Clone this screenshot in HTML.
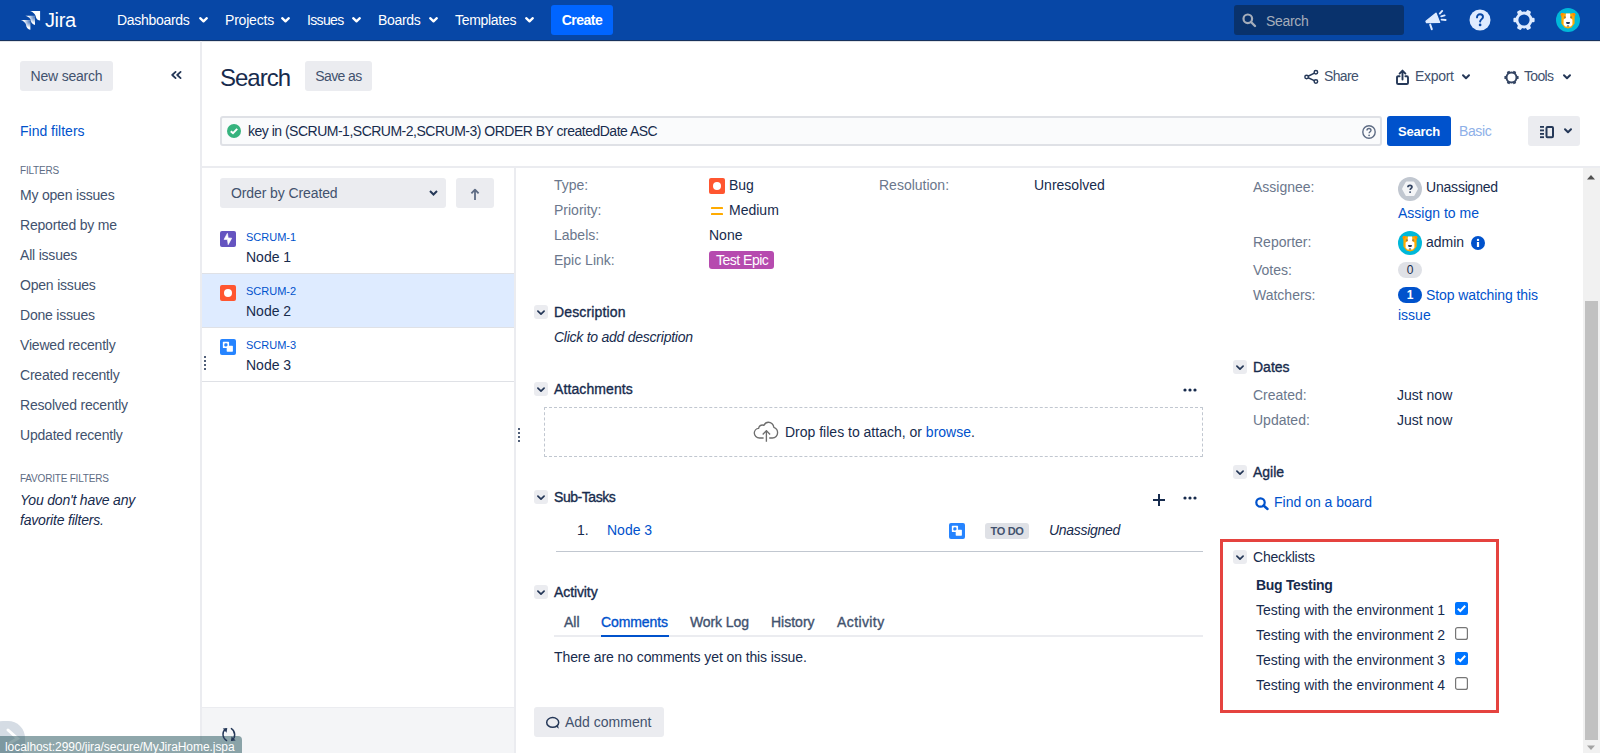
<!DOCTYPE html>
<html><head><meta charset="utf-8">
<style>
*{box-sizing:border-box;margin:0;padding:0}
html,body{width:1600px;height:753px;overflow:hidden;background:#fff;font-family:"Liberation Sans",sans-serif;font-size:14px;color:#172B4D}
.a{position:absolute}
.t{position:absolute;white-space:nowrap;line-height:20px}
.nv{color:#fff;top:10px}
.btn{position:absolute;background:#EBECF0;border-radius:3px;line-height:30px;text-align:center;color:#42526E}
.lbl{color:#6B778C}
.side{color:#42526E;left:20px}
.link{color:#0052CC}
.sh{-webkit-text-stroke:0.35px currentColor;color:#172B4D}
.tog{position:absolute;width:14px;height:14px;border-radius:3px;background:#EBECF0}
.tog svg{position:absolute;left:3px;top:4.5px}
svg{position:absolute;overflow:visible}
</style></head><body>

<!-- ============ NAV ============ -->
<div class="a" style="left:0;top:0;width:1600px;height:41px;background:#0747A6"></div>
<div class="a" style="left:0;top:40px;width:1600px;height:1px;background:#18325C"></div>
<div class="a" style="left:0;top:41px;width:1600px;height:1px;background:rgba(9,30,66,0.12)"></div>
<svg style="left:20px;top:10px" width="21" height="20" viewBox="20 10 21 20">
  <defs>
    <radialGradient id="lg1" cx="0.95" cy="0.15" r="0.75"><stop offset="0" stop-color="#fff" stop-opacity=".25"/><stop offset=".85" stop-color="#fff"/></radialGradient>
  </defs>
  <path d="M30.1 11.1 H40.1 V20.6 C38.4 20.2 36.6 19.2 36 17.4 C35.6 15.8 35.4 14.4 33.8 13.2 C32.8 12.3 31.4 11.5 30.1 11.1 Z" fill="#fff"/>
  <path d="M25.4 15.7 H35 V25 C33.3 24.6 31.6 23.4 31 21.6 C30.6 20 30.6 18.6 29 17.5 C28 16.6 26.7 16 25.4 15.7 Z" fill="url(#lg1)"/>
  <path d="M20.9 20.1 H30.4 V29.8 C28.7 29.4 27 28.2 26.4 26.4 C26 24.8 26 23.4 24.4 22.2 C23.4 21.3 22.2 20.5 20.9 20.1 Z" fill="url(#lg1)"/>
</svg>
<div class="t" style="left:45px;top:8px;font-size:20px;line-height:24px;color:#fff;letter-spacing:-0.4px">Jira</div>

<div class="t nv" style="left:117px;letter-spacing:-0.3px">Dashboards</div>
<svg style="left:199px;top:17px" width="9" height="6" viewBox="0 0 9 6"><path d="M1.2 1.2 L4.5 4.4 L7.8 1.2" stroke="#fff" stroke-width="2.3" fill="none" stroke-linecap="round" stroke-linejoin="round"/></svg>
<div class="t nv" style="left:225px;letter-spacing:-0.2px">Projects</div>
<svg style="left:281px;top:17px" width="9" height="6" viewBox="0 0 9 6"><path d="M1.2 1.2 L4.5 4.4 L7.8 1.2" stroke="#fff" stroke-width="2.3" fill="none" stroke-linecap="round" stroke-linejoin="round"/></svg>
<div class="t nv" style="left:307px;letter-spacing:-0.65px">Issues</div>
<svg style="left:352px;top:17px" width="9" height="6" viewBox="0 0 9 6"><path d="M1.2 1.2 L4.5 4.4 L7.8 1.2" stroke="#fff" stroke-width="2.3" fill="none" stroke-linecap="round" stroke-linejoin="round"/></svg>
<div class="t nv" style="left:378px;letter-spacing:-0.3px">Boards</div>
<svg style="left:429px;top:17px" width="9" height="6" viewBox="0 0 9 6"><path d="M1.2 1.2 L4.5 4.4 L7.8 1.2" stroke="#fff" stroke-width="2.3" fill="none" stroke-linecap="round" stroke-linejoin="round"/></svg>
<div class="t nv" style="left:455px;letter-spacing:-0.3px">Templates</div>
<svg style="left:525px;top:17px" width="9" height="6" viewBox="0 0 9 6"><path d="M1.2 1.2 L4.5 4.4 L7.8 1.2" stroke="#fff" stroke-width="2.3" fill="none" stroke-linecap="round" stroke-linejoin="round"/></svg>
<div class="a" style="left:551px;top:5px;width:62px;height:30px;background:#0065FF;border-radius:3px;color:#fff;font-weight:bold;line-height:30px;text-align:center;letter-spacing:-0.5px">Create</div>

<div class="a" style="left:1234px;top:5px;width:170px;height:30px;background:#09326C;border-radius:3px"></div>
<svg style="left:1242px;top:13px" width="14" height="14" viewBox="0 0 14 14"><circle cx="5.8" cy="5.8" r="4.3" stroke="#A5ADBA" stroke-width="2.2" fill="none"/><path d="M9 9 L13 13" stroke="#A5ADBA" stroke-width="2.4" stroke-linecap="round"/></svg>
<div class="t" style="left:1266px;top:11px;color:#A5ADBA;letter-spacing:-0.3px">Search</div>

<!-- megaphone -->
<svg style="left:1425px;top:10px" width="22" height="20" viewBox="0 0 22 20">
  <path d="M1 11.3 L11 3.2 L14.6 12.4 L1.6 12.6 Z" fill="#DEEBFF" stroke="#DEEBFF" stroke-width="1.4" stroke-linejoin="round"/>
  <path d="M5.2 14.6 L6.8 19.2" stroke="#DEEBFF" stroke-width="2" stroke-linecap="round"/>
  <path d="M14.8 3.6 L17.2 0.9 M16.2 6.3 L19.6 5.4 M16.6 9.6 L20.6 10" stroke="#DEEBFF" stroke-width="1.9" stroke-linecap="round"/>
</svg>
<!-- help -->
<svg style="left:1469px;top:9px" width="22" height="22" viewBox="0 0 22 22">
  <circle cx="11" cy="11" r="10.5" fill="#DEEBFF"/>
  <path d="M8 8.4 C8 6.4 9.3 5.3 11 5.3 C12.8 5.3 14 6.4 14 8 C14 10 11.3 10.2 11.1 12.6" stroke="#0747A6" stroke-width="1.9" fill="none" stroke-linecap="round"/>
  <circle cx="11.1" cy="15.9" r="1.35" fill="#0747A6"/>
</svg>
<!-- gear -->
<svg style="left:1513px;top:9px" width="22" height="22" viewBox="0 0 22 22">
  <g fill="#DEEBFF">
    <circle cx="11" cy="11" r="8.4"/>
    <g transform="rotate(30 11 11)"><rect x="8.7" y="0.4" width="4.6" height="4" rx="1.2"/><rect x="8.7" y="17.6" width="4.6" height="4" rx="1.2"/></g>
    <g transform="rotate(90 11 11)"><rect x="8.7" y="0.4" width="4.6" height="4" rx="1.2"/><rect x="8.7" y="17.6" width="4.6" height="4" rx="1.2"/></g>
    <g transform="rotate(150 11 11)"><rect x="8.7" y="0.4" width="4.6" height="4" rx="1.2"/><rect x="8.7" y="17.6" width="4.6" height="4" rx="1.2"/></g>
  </g>
  <circle cx="11" cy="11" r="5.6" fill="#0747A6"/>
</svg>
<!-- avatar -->
<svg style="left:1556px;top:8px" width="24" height="24" viewBox="0 0 24 24">
  <circle cx="12" cy="12" r="12" fill="#00B8D9"/>
  <path d="M4.6 6.8 C4.6 5.2 6 4.6 7 5 L9 5.6 H15 L17 5 C18 4.6 19.4 5.2 19.4 6.8 L18.6 8.6 V15.5 L15.5 19.6 L12 20.4 L8.5 19.6 L5.4 15.5 V8.6 Z" fill="#FFAB00"/>
  <path d="M4.6 6.8 C4.6 5.2 6 4.6 7 5 L8 5.4 L5.4 9 Z M19.4 6.8 C19.4 5.2 18 4.6 17 5 L16 5.4 L18.6 9 Z" fill="#FF8B00"/>
  <path d="M9.9 5.6 H14.1 L14.4 10.3 L16.4 11.4 V16.8 L14.6 18.4 H9.4 L7.6 16.8 V11.4 L9.6 10.3 Z" fill="#fff"/>
  <circle cx="8.9" cy="9.2" r="1" fill="#9C7A4A"/><circle cx="15.1" cy="9.2" r="1" fill="#9C7A4A"/>
  <path d="M10 14.1 H14 L13.4 15.9 H10.6 Z" fill="#253858"/>
  <path d="M10.9 17.6 H13.1 L12.7 18.6 H11.3 Z" fill="#253858"/>
</svg>

<!-- ============ LEFT SIDEBAR ============ -->
<div class="a" style="left:200px;top:41px;width:2px;height:712px;background:#EBECF0"></div>
<div class="btn" style="left:20px;top:61px;width:93px;height:30px;letter-spacing:-0.2px">New search</div>
<svg style="left:171px;top:71px" width="11" height="8" viewBox="0 0 11 8"><path d="M4.6 0.9 L1.2 4 L4.6 7.1 M9.6 0.9 L6.2 4 L9.6 7.1" stroke="#253858" stroke-width="1.8" fill="none" stroke-linecap="round" stroke-linejoin="round"/></svg>
<div class="t link" style="left:20px;top:121px">Find filters</div>
<div class="t" style="left:20px;top:163px;font-size:10px;line-height:16px;color:#5E6C84;letter-spacing:-0.2px">FILTERS</div>
<div class="t side" style="top:185px;letter-spacing:-0.2px">My open issues</div>
<div class="t side" style="top:215px;letter-spacing:-0.2px">Reported by me</div>
<div class="t side" style="top:245px;letter-spacing:-0.2px">All issues</div>
<div class="t side" style="top:275px;letter-spacing:-0.2px">Open issues</div>
<div class="t side" style="top:305px;letter-spacing:-0.2px">Done issues</div>
<div class="t side" style="top:335px;letter-spacing:-0.2px">Viewed recently</div>
<div class="t side" style="top:365px;letter-spacing:-0.2px">Created recently</div>
<div class="t side" style="top:395px;letter-spacing:-0.2px">Resolved recently</div>
<div class="t side" style="top:425px;letter-spacing:-0.2px">Updated recently</div>
<div class="t" style="left:20px;top:471px;font-size:10px;line-height:16px;color:#5E6C84;letter-spacing:-0.2px">FAVORITE FILTERS</div>
<div class="t" style="left:20px;top:490px;font-style:italic;color:#172B4D;letter-spacing:-0.2px">You don't have any</div>
<div class="t" style="left:20px;top:510px;font-style:italic;color:#172B4D;letter-spacing:-0.2px">favorite filters.</div>
<!-- ============ HEADER ============ -->
<div class="t" style="left:220px;top:63px;font-size:24px;line-height:30px;color:#172B4D;letter-spacing:-1px">Search</div>
<div class="btn" style="left:305px;top:61px;width:67px;height:30px;letter-spacing:-0.6px">Save as</div>

<svg style="left:1304px;top:70px" width="14" height="14" viewBox="0 0 14 14"><g stroke="#253858" stroke-width="1.45" fill="#fff"><path d="M2.6 7 L11.9 2.3 M2.6 7 L11.9 11.4" fill="none"/><circle cx="2.6" cy="7" r="1.75"/><circle cx="11.9" cy="2.3" r="1.75"/><circle cx="11.9" cy="11.4" r="1.75"/></g></svg>
<div class="t" style="left:1324px;top:66px;color:#42526E;letter-spacing:-0.65px">Share</div>
<svg style="left:1396px;top:69px" width="13" height="16" viewBox="0 0 13 16"><g stroke="#253858" stroke-width="1.9" fill="none" stroke-linejoin="round" stroke-linecap="round"><path d="M6.5 10.5 V1.8 M3.6 4.6 L6.5 1.6 L9.4 4.6"/><path d="M3.6 7.2 H2.2 C1.5 7.2 1 7.7 1 8.4 V14 C1 14.6 1.5 15 2.2 15 H10.8 C11.5 15 12 14.6 12 14 V8.4 C12 7.7 11.5 7.2 10.8 7.2 H9.4"/></g></svg>
<div class="t" style="left:1415px;top:66px;color:#42526E;letter-spacing:-0.3px">Export</div>
<svg style="left:1462px;top:74px" width="8" height="6" viewBox="0 0 8 6"><path d="M1 1.2 L4 4.2 L7 1.2" stroke="#253858" stroke-width="2" fill="none" stroke-linecap="round" stroke-linejoin="round"/></svg>
<svg style="left:1504px;top:70px" width="15" height="15" viewBox="0 0 15 15">
  <circle cx="7.5" cy="7.5" r="5" stroke="#344563" stroke-width="2" fill="none"/>
  <g fill="#344563">
    <g transform="rotate(30 7.5 7.5)"><rect x="6" y="0.4" width="3" height="2.4" rx="0.6"/><rect x="6" y="12.2" width="3" height="2.4" rx="0.6"/></g>
    <g transform="rotate(90 7.5 7.5)"><rect x="6" y="0.4" width="3" height="2.4" rx="0.6"/><rect x="6" y="12.2" width="3" height="2.4" rx="0.6"/></g>
    <g transform="rotate(150 7.5 7.5)"><rect x="6" y="0.4" width="3" height="2.4" rx="0.6"/><rect x="6" y="12.2" width="3" height="2.4" rx="0.6"/></g>
  </g>
</svg>
<div class="t" style="left:1524px;top:66px;color:#42526E;letter-spacing:-0.65px">Tools</div>
<svg style="left:1563px;top:74px" width="8" height="6" viewBox="0 0 8 6"><path d="M1 1.2 L4 4.2 L7 1.2" stroke="#253858" stroke-width="2" fill="none" stroke-linecap="round" stroke-linejoin="round"/></svg>

<div class="a" style="left:220px;top:116px;width:1162px;height:30px;background:#FAFBFC;border:2px solid #DFE1E6;border-radius:3px"></div>
<svg style="left:227px;top:124px" width="14" height="14" viewBox="0 0 14 14"><circle cx="7" cy="7" r="7" fill="#36B37E"/><path d="M3.8 7.2 L6 9.2 L10.2 4.9" stroke="#fff" stroke-width="2" fill="none"/></svg>
<div class="t" style="left:248px;top:121px;letter-spacing:-0.5px">key in (SCRUM-1,SCRUM-2,SCRUM-3) ORDER BY createdDate ASC</div>
<svg style="left:1362px;top:125px" width="14" height="14" viewBox="0 0 14 14"><circle cx="7" cy="7" r="6.2" stroke="#5E6C84" stroke-width="1.4" fill="none"/><path d="M5 5.5 C5 4 6 3.5 7 3.5 C8.2 3.5 9 4.2 9 5.3 C9 6.6 7.2 6.8 7.1 8.3" stroke="#5E6C84" stroke-width="1.4" fill="none"/><circle cx="7.1" cy="10.3" r="0.9" fill="#5E6C84"/></svg>
<div class="a" style="left:1387px;top:116px;width:64px;height:30px;background:#0052CC;border-radius:3px;color:#fff;font-weight:bold;font-size:13px;line-height:31px;text-align:center;letter-spacing:-0.2px">Search</div>
<div class="t" style="left:1459px;top:121px;color:#8EB0E8;letter-spacing:-0.4px">Basic</div>
<div class="a" style="left:1528px;top:116px;width:52px;height:30px;background:#EBECF0;border-radius:3px"></div>
<svg style="left:1540px;top:125px" width="15" height="14" viewBox="0 0 15 14"><g fill="#253858"><rect x="0" y="1" width="4" height="1.8"/><rect x="0" y="4.5" width="4" height="1.8"/><rect x="0" y="8" width="4" height="1.8"/><rect x="0" y="11.3" width="4" height="1.8"/></g><rect x="6.5" y="1.9" width="6.5" height="10.3" rx="1" stroke="#253858" stroke-width="2" fill="none"/></svg>
<svg style="left:1564px;top:128px" width="8" height="6" viewBox="0 0 8 6"><path d="M1 1.2 L4 4.2 L7 1.2" stroke="#253858" stroke-width="2" fill="none" stroke-linecap="round" stroke-linejoin="round"/></svg>

<div class="a" style="left:202px;top:166px;width:1398px;height:2px;background:#EBECF0"></div>


<!-- ============ ISSUE LIST ============ -->
<div class="a" style="left:514px;top:168px;width:2px;height:585px;background:#EBECF0"></div>
<div class="a" style="left:220px;top:178px;width:226px;height:30px;background:#EBECF0;border-radius:3px"></div>
<div class="t" style="left:231px;top:183px;color:#42526E;letter-spacing:-0.1px">Order by Created</div>
<svg style="left:429px;top:190px" width="9" height="6" viewBox="0 0 9 6"><path d="M1 1 L4.5 4.5 L8 1" stroke="#253858" stroke-width="2" fill="none"/></svg>
<div class="a" style="left:456px;top:178px;width:38px;height:30px;background:#EBECF0;border-radius:3px"></div>
<svg style="left:469px;top:187px" width="12" height="14" viewBox="0 0 12 14"><path d="M6 13 V2.8 M2.4 6.4 L6 2.6 L9.6 6.4" stroke="#5E6C84" stroke-width="1.8" fill="none" stroke-linejoin="round"/></svg>

<div class="a" style="left:202px;top:273px;width:312px;height:1px;background:#DFE1E6"></div>
<div class="a" style="left:202px;top:274px;width:312px;height:53px;background:#DEEBFF"></div>
<div class="a" style="left:202px;top:327px;width:312px;height:1px;background:#DFE1E6"></div>
<div class="a" style="left:202px;top:381px;width:312px;height:1px;background:#DFE1E6"></div>

<svg style="left:220px;top:231px" width="16" height="16" viewBox="0 0 16 16"><rect width="16" height="16" rx="2" fill="#6554C0"/><path d="M7.4 2.3 L4 8.4 L7.4 8.6 L8.2 13.7 L11.7 7.2 L8.2 6.9 Z" fill="#fff" stroke="#fff" stroke-width="0.6" stroke-linejoin="round"/></svg>
<div class="t link" style="left:246px;top:229px;font-size:11px;line-height:16px">SCRUM-1</div>
<div class="t" style="left:246px;top:247px">Node 1</div>

<svg style="left:220px;top:285px" width="16" height="16" viewBox="0 0 16 16"><rect width="16" height="16" rx="2" fill="#FF5630"/><circle cx="8" cy="8" r="4" fill="#fff"/></svg>
<div class="t link" style="left:246px;top:283px;font-size:11px;line-height:16px">SCRUM-2</div>
<div class="t" style="left:246px;top:301px">Node 2</div>

<svg style="left:220px;top:339px" width="16" height="16" viewBox="0 0 16 16"><rect width="16" height="16" rx="2" fill="#2684FF"/><rect x="2.85" y="2.8" width="6.2" height="6.2" rx="0.6" fill="#fff"/><rect x="4.3" y="4.3" width="3.2" height="3.2" rx="1.2" fill="#2684FF"/><rect x="6.7" y="6.85" width="6.2" height="5.85" rx="0.6" fill="#fff"/></svg>
<div class="t link" style="left:246px;top:337px;font-size:11px;line-height:16px">SCRUM-3</div>
<div class="t" style="left:246px;top:355px">Node 3</div>

<svg style="left:204px;top:356px" width="2" height="14" viewBox="0 0 2 14"><g fill="#505F79"><rect y="0" width="2" height="2"/><rect y="4" width="2" height="2"/><rect y="8" width="2" height="2"/><rect y="12" width="2" height="2"/></g></svg>

<div class="a" style="left:202px;top:707px;width:312px;height:1px;background:#EBECF0"></div>
<div class="a" style="left:202px;top:708px;width:312px;height:45px;background:#F4F5F7"></div>


<!-- status bar -->

<div class="a" style="left:-14px;top:721px;width:39px;height:40px;border-radius:17px;background:#D5DCE4"></div>
<svg style="left:0px;top:725px" width="24" height="24" viewBox="0 0 24 24"><path d="M8 5 L17.5 13.5 L10 18" stroke="#fff" stroke-width="3" fill="none" stroke-linecap="round"/></svg>
<div class="a" style="left:0;top:736px;width:242px;height:17px;background:rgba(62,104,110,0.58);border-top-right-radius:4px"></div>
<div class="t" style="left:5px;top:739px;font-size:12px;line-height:16px;color:#fff;letter-spacing:-0.06px">localhost:2990/jira/secure/MyJiraHome.jspa</div>
<svg style="left:221px;top:727px" width="16" height="15" viewBox="0 0 16 15"><g stroke="#253858" stroke-width="1.45" fill="none" stroke-linecap="round"><path d="M4.6 2.2 C2.6 3.6 1.8 5.8 2 8 C2.3 10.4 3.6 12.4 5.6 13.6"/><path d="M10.4 1.6 C12.4 2.8 13.6 5 13.7 7.6 C13.7 10 12.6 12.2 10.8 13.2"/></g><path d="M1.8 1.4 L6.3 1 L5.5 5.8 Z" fill="#253858"/><path d="M10 13.9 L14.6 13.5 L10.6 9.6 Z" fill="#253858"/></svg>
<!-- drag handle detail -->
<svg style="left:518px;top:428px" width="2" height="14" viewBox="0 0 2 14"><g fill="#505F79"><rect y="0" width="2" height="2"/><rect y="4" width="2" height="2"/><rect y="8" width="2" height="2"/><rect y="12" width="2" height="2"/></g></svg>

<!-- ============ DETAIL ============ -->
<div class="t lbl" style="left:554px;top:175px">Type:</div>
<svg style="left:709px;top:178px" width="16" height="16" viewBox="0 0 16 16"><rect width="16" height="16" rx="2" fill="#FF5630"/><circle cx="8" cy="8" r="4" fill="#fff"/></svg>
<div class="t" style="left:729px;top:175px">Bug</div>
<div class="t lbl" style="left:554px;top:200px">Priority:</div>
<svg style="left:711px;top:206px" width="12" height="10" viewBox="0 0 12 10"><rect y="1" width="12" height="2" rx="0.6" fill="#FFAB00"/><rect y="7" width="12" height="2" rx="0.6" fill="#FFAB00"/></svg>
<div class="t" style="left:729px;top:200px">Medium</div>
<div class="t lbl" style="left:554px;top:225px">Labels:</div>
<div class="t" style="left:709px;top:225px">None</div>
<div class="t lbl" style="left:554px;top:250px">Epic Link:</div>
<div class="a" style="left:709px;top:251px;width:65px;height:18px;background:#B64BAF;border-radius:3px"></div>
<div class="t" style="left:716px;top:250px;color:#fff;letter-spacing:-0.5px">Test Epic</div>

<div class="t lbl" style="left:879px;top:175px">Resolution:</div>
<div class="t" style="left:1034px;top:175px">Unresolved</div>

<div class="tog" style="left:534px;top:305px"><svg width="8" height="6" viewBox="0 0 8 6"><path d="M0.9 1.2 L4 4.2 L7.1 1.2" stroke="#253858" stroke-width="1.7" fill="none" stroke-linecap="round" stroke-linejoin="round"/></svg></div>
<div class="t sh" style="left:554px;top:302px;letter-spacing:0.15px">Description</div>
<div class="t" style="left:554px;top:327px;font-style:italic;letter-spacing:-0.25px">Click to add description</div>

<div class="tog" style="left:534px;top:382px"><svg width="8" height="6" viewBox="0 0 8 6"><path d="M0.9 1.2 L4 4.2 L7.1 1.2" stroke="#253858" stroke-width="1.7" fill="none" stroke-linecap="round" stroke-linejoin="round"/></svg></div>
<div class="t sh" style="left:554px;top:379px;letter-spacing:0.1px">Attachments</div>
<svg style="left:1183px;top:388px" width="15" height="4" viewBox="0 0 15 4"><g fill="#172B4D"><circle cx="2" cy="2" r="1.6"/><circle cx="7" cy="2" r="1.6"/><circle cx="12" cy="2" r="1.6"/></g></svg>
<div class="a" style="left:544px;top:407px;width:659px;height:50px;border:1px dashed #C1C7D0;border-radius:1px"></div>
<svg style="left:753px;top:421px" width="26" height="22" viewBox="0 0 26 22"><g stroke="#6E6E6E" stroke-width="1.35" fill="none" stroke-linejoin="round"><path d="M10.6 17 H6.5 C3.6 17 1.3 14.8 1.3 12.1 C1.3 9.6 3.2 7.6 5.6 7.4 C6 5.4 7.6 4 9.5 4 C10 4 10.4 4.1 10.8 4.3 C11.9 2.3 13.4 1.2 15.3 1.2 C18.3 1.2 20.6 3.6 20.8 6.3 C22.9 7 24.6 9.2 24.6 11.7 C24.6 14.7 22.3 17 19.4 17 H16.2"/><path d="M13.4 20.7 V9.6 M9.7 13.5 L13.4 9.6 L17.1 13.5"/></g></svg>
<div class="t" style="left:785px;top:422px">Drop files to attach, or <span class="link">browse</span>.</div>

<div class="tog" style="left:534px;top:490px"><svg width="8" height="6" viewBox="0 0 8 6"><path d="M0.9 1.2 L4 4.2 L7.1 1.2" stroke="#253858" stroke-width="1.7" fill="none" stroke-linecap="round" stroke-linejoin="round"/></svg></div>
<div class="t sh" style="left:554px;top:487px;letter-spacing:-0.45px">Sub-Tasks</div>
<svg style="left:1153px;top:494px" width="12" height="12" viewBox="0 0 12 12"><path d="M6 0 V12 M0 6 H12" stroke="#172B4D" stroke-width="2"/></svg>
<svg style="left:1183px;top:496px" width="15" height="4" viewBox="0 0 15 4"><g fill="#172B4D"><circle cx="2" cy="2" r="1.6"/><circle cx="7" cy="2" r="1.6"/><circle cx="12" cy="2" r="1.6"/></g></svg>
<div class="t" style="left:577px;top:520px">1.</div>
<div class="t link" style="left:607px;top:520px">Node 3</div>
<svg style="left:949px;top:523px" width="16" height="16" viewBox="0 0 16 16"><rect width="16" height="16" rx="2" fill="#2684FF"/><rect x="2.85" y="2.8" width="6.2" height="6.2" rx="0.6" fill="#fff"/><rect x="4.3" y="4.3" width="3.2" height="3.2" rx="1.2" fill="#2684FF"/><rect x="6.7" y="6.85" width="6.2" height="5.85" rx="0.6" fill="#fff"/></svg>
<div class="a" style="left:985px;top:523px;width:44px;height:16px;background:#DFE1E6;border-radius:3px;color:#42526E;font-weight:bold;font-size:11px;line-height:16px;text-align:center;letter-spacing:-0.3px">TO DO</div>
<div class="t" style="left:1049px;top:520px;font-style:italic;letter-spacing:-0.3px">Unassigned</div>
<div class="a" style="left:556px;top:551px;width:647px;height:1px;background:#C1C7D0"></div>

<div class="tog" style="left:534px;top:585px"><svg width="8" height="6" viewBox="0 0 8 6"><path d="M0.9 1.2 L4 4.2 L7.1 1.2" stroke="#253858" stroke-width="1.7" fill="none" stroke-linecap="round" stroke-linejoin="round"/></svg></div>
<div class="t sh" style="left:554px;top:582px;letter-spacing:-0.1px">Activity</div>
<div class="t sh" style="left:564px;top:612px;color:#42526E">All</div>
<div class="t sh" style="left:601px;top:612px;color:#0052CC;letter-spacing:-0.1px">Comments</div>
<div class="t sh" style="left:690px;top:612px;color:#42526E;letter-spacing:-0.1px">Work Log</div>
<div class="t sh" style="left:771px;top:612px;color:#42526E">History</div>
<div class="t sh" style="left:837px;top:612px;color:#42526E;letter-spacing:0.4px">Activity</div>
<div class="a" style="left:554px;top:635px;width:649px;height:2px;background:#EBECF0"></div>
<div class="a" style="left:601px;top:635px;width:68px;height:2px;background:#0052CC"></div>
<div class="t" style="left:554px;top:647px;letter-spacing:-0.1px">There are no comments yet on this issue.</div>

<div class="btn" style="left:534px;top:707px;width:130px;height:30px"></div>
<svg style="left:546px;top:715px" width="15" height="15" viewBox="0 0 15 15"><ellipse cx="6.7" cy="7.4" rx="6" ry="4.85" stroke="#253858" stroke-width="1.5" fill="none"/><path d="M9.6 11.2 L12.8 13.7 L11.9 10" fill="#253858"/></svg>
<div class="t" style="left:565px;top:712px;color:#42526E">Add comment</div>

<!-- ============ RIGHT COLUMN ============ -->
<div class="t lbl" style="left:1253px;top:177px">Assignee:</div>
<svg style="left:1398px;top:177px" width="24" height="24" viewBox="0 0 24 24"><circle cx="12" cy="12" r="12" fill="#C1C7D0"/><path d="M5.4 11.8 L8.7 5.9 H15.3 L18.6 11.8 L15.3 17.8 H8.7 Z" fill="#F4F5F7" stroke="#F4F5F7" stroke-width="2.6" stroke-linejoin="round"/><path d="M9.9 10.2 C9.9 8.9 10.8 8.3 12 8.3 C13.2 8.3 14 9 14 10 C14 11.3 12.3 11.4 12.1 12.9" stroke="#344563" stroke-width="1.7" fill="none"/><circle cx="12.1" cy="15.1" r="0.95" fill="#344563"/></svg>
<div class="t" style="left:1426px;top:177px;letter-spacing:-0.2px">Unassigned</div>
<div class="t link" style="left:1398px;top:203px">Assign to me</div>
<div class="t lbl" style="left:1253px;top:232px">Reporter:</div>
<svg style="left:1398px;top:231px" width="24" height="24" viewBox="0 0 24 24">
  <circle cx="12" cy="12" r="12" fill="#00B8D9"/>
  <path d="M4.6 6.8 C4.6 5.2 6 4.6 7 5 L9 5.6 H15 L17 5 C18 4.6 19.4 5.2 19.4 6.8 L18.6 8.6 V15.5 L15.5 19.6 L12 20.4 L8.5 19.6 L5.4 15.5 V8.6 Z" fill="#FFAB00"/>
  <path d="M4.6 6.8 C4.6 5.2 6 4.6 7 5 L8 5.4 L5.4 9 Z M19.4 6.8 C19.4 5.2 18 4.6 17 5 L16 5.4 L18.6 9 Z" fill="#FF8B00"/>
  <path d="M9.9 5.6 H14.1 L14.4 10.3 L16.4 11.4 V16.8 L14.6 18.4 H9.4 L7.6 16.8 V11.4 L9.6 10.3 Z" fill="#fff"/>
  <circle cx="8.9" cy="9.2" r="1" fill="#9C7A4A"/><circle cx="15.1" cy="9.2" r="1" fill="#9C7A4A"/>
  <path d="M10 14.1 H14 L13.4 15.9 H10.6 Z" fill="#253858"/>
  <path d="M10.9 17.6 H13.1 L12.7 18.6 H11.3 Z" fill="#253858"/>
</svg>
<div class="t" style="left:1426px;top:232px">admin</div>
<svg style="left:1471px;top:236px" width="14" height="14" viewBox="0 0 14 14"><circle cx="7" cy="7" r="7" fill="#0052CC"/><rect x="5.9" y="6" width="2.2" height="5" fill="#fff"/><circle cx="7" cy="3.9" r="1.2" fill="#fff"/></svg>
<div class="t lbl" style="left:1253px;top:260px">Votes:</div>
<div class="a" style="left:1398px;top:262px;width:24px;height:16px;border-radius:8px;background:#DFE1E6;color:#172B4D;font-size:12px;line-height:17px;text-align:center">0</div>
<div class="t lbl" style="left:1253px;top:285px">Watchers:</div>
<div class="a" style="left:1398px;top:287px;width:24px;height:16px;border-radius:8px;background:#0052CC;color:#fff;font-weight:bold;font-size:12px;line-height:17px;text-align:center">1</div>
<div class="t link" style="left:1426px;top:285px;letter-spacing:-0.1px">Stop watching this</div>
<div class="t link" style="left:1398px;top:305px">issue</div>

<div class="tog" style="left:1233px;top:360px"><svg width="8" height="6" viewBox="0 0 8 6"><path d="M0.9 1.2 L4 4.2 L7.1 1.2" stroke="#253858" stroke-width="1.7" fill="none" stroke-linecap="round" stroke-linejoin="round"/></svg></div>
<div class="t sh" style="left:1253px;top:357px">Dates</div>
<div class="t lbl" style="left:1253px;top:385px">Created:</div>
<div class="t" style="left:1397px;top:385px">Just now</div>
<div class="t lbl" style="left:1253px;top:410px">Updated:</div>
<div class="t" style="left:1397px;top:410px">Just now</div>

<div class="tog" style="left:1233px;top:465px"><svg width="8" height="6" viewBox="0 0 8 6"><path d="M0.9 1.2 L4 4.2 L7.1 1.2" stroke="#253858" stroke-width="1.7" fill="none" stroke-linecap="round" stroke-linejoin="round"/></svg></div>
<div class="t sh" style="left:1253px;top:462px">Agile</div>
<svg style="left:1255px;top:497px" width="14" height="13" viewBox="0 0 14 13"><circle cx="5.5" cy="5.5" r="4.2" stroke="#0052CC" stroke-width="2.2" fill="none"/><path d="M8.5 8.5 L12.5 12" stroke="#0052CC" stroke-width="2.4" stroke-linecap="round"/></svg>
<div class="t link" style="left:1274px;top:492px">Find on a board</div>

<div class="a" style="left:1220px;top:539px;width:279px;height:174px;border:3px solid #E5433F"></div>
<div class="tog" style="left:1233px;top:550px"><svg width="8" height="6" viewBox="0 0 8 6"><path d="M0.9 1.2 L4 4.2 L7.1 1.2" stroke="#253858" stroke-width="1.7" fill="none" stroke-linecap="round" stroke-linejoin="round"/></svg></div>
<div class="t" style="left:1253px;top:547px;letter-spacing:-0.2px">Checklists</div>
<div class="t" style="left:1256px;top:575px;font-weight:bold;letter-spacing:-0.3px">Bug Testing</div>
<div class="t" style="left:1256px;top:600px;">Testing with the environment 1</div>
<div class="t" style="left:1256px;top:625px;">Testing with the environment 2</div>
<div class="t" style="left:1256px;top:650px;">Testing with the environment 3</div>
<div class="t" style="left:1256px;top:675px;">Testing with the environment 4</div>
<svg style="left:1455px;top:602px" width="13" height="13" viewBox="0 0 13 13"><rect width="13" height="13" rx="2" fill="#0075FF"/><path d="M2.8 6.6 L5.3 9 L10.2 3.8" stroke="#fff" stroke-width="2" fill="none"/></svg>
<svg style="left:1455px;top:627px" width="13" height="13" viewBox="0 0 13 13"><rect x="0.6" y="0.6" width="11.8" height="11.8" rx="2" fill="#fff" stroke="#767676" stroke-width="1.2"/></svg>
<svg style="left:1455px;top:652px" width="13" height="13" viewBox="0 0 13 13"><rect width="13" height="13" rx="2" fill="#0075FF"/><path d="M2.8 6.6 L5.3 9 L10.2 3.8" stroke="#fff" stroke-width="2" fill="none"/></svg>
<svg style="left:1455px;top:677px" width="13" height="13" viewBox="0 0 13 13"><rect x="0.6" y="0.6" width="11.8" height="11.8" rx="2" fill="#fff" stroke="#767676" stroke-width="1.2"/></svg>

<!-- scrollbar -->
<div class="a" style="left:1583px;top:168px;width:17px;height:585px;background:#F1F1F1"></div>
<div class="a" style="left:1585px;top:301px;width:13px;height:439px;background:#C1C1C1"></div>
<svg style="left:1586px;top:174px" width="10" height="6" viewBox="0 0 10 6"><path d="M1 5.5 L5 1 L9 5.5 Z" fill="#505050"/></svg>
<svg style="left:1586px;top:745px" width="10" height="6" viewBox="0 0 10 6"><path d="M1 0.5 L5 5 L9 0.5 Z" fill="#A3A3A3"/></svg>

</body></html>
